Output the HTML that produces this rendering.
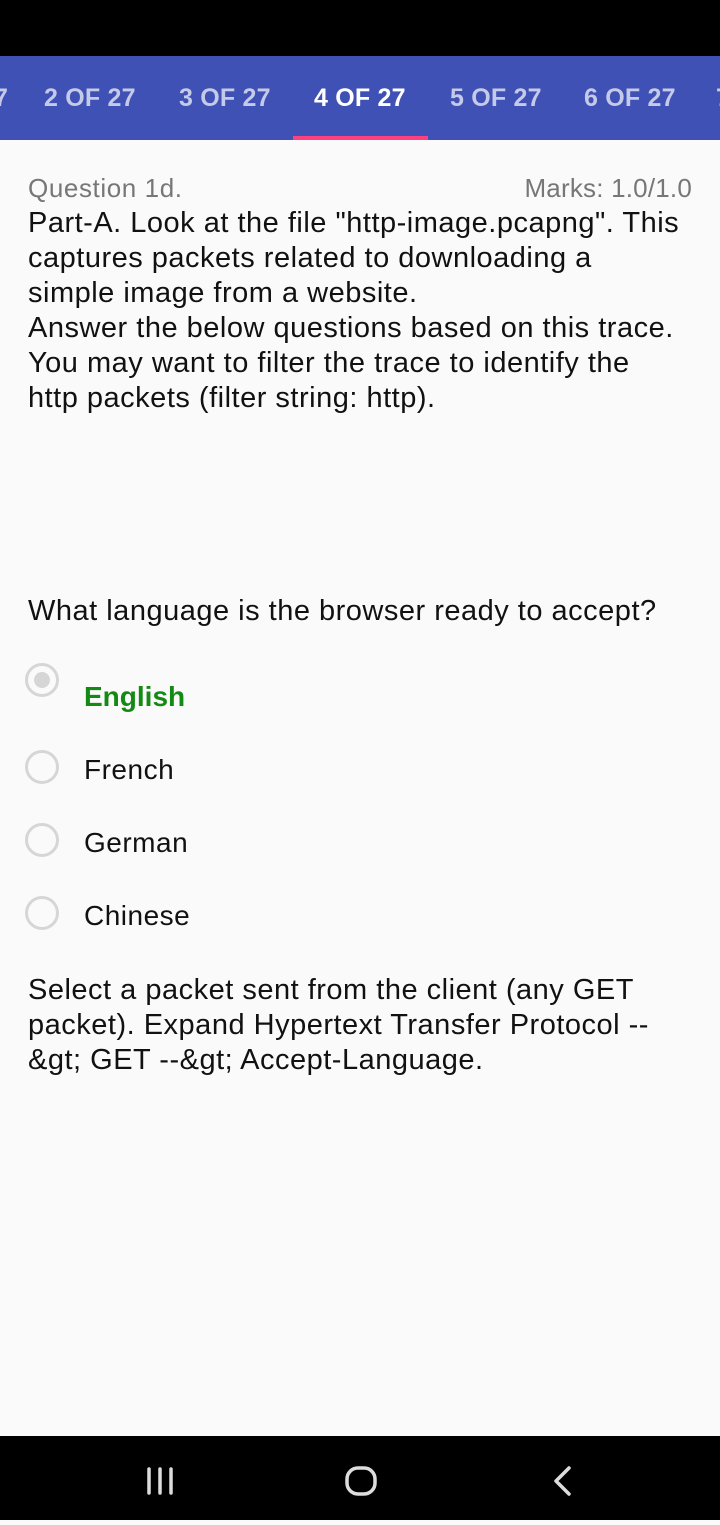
<!DOCTYPE html>
<html><head><meta charset="utf-8"><style>
*{margin:0;padding:0;box-sizing:border-box}
body{width:720px;height:1520px;background:#fafafa;font-family:"Liberation Sans",sans-serif;position:relative;overflow:hidden}
.top{position:absolute;left:0;top:0;width:720px;height:56px;background:#000}
.tabs{position:absolute;left:0;top:56px;width:720px;height:84px;background:#3f51b5}
.tab{position:absolute;top:28px;font-size:25px;color:#c5cae9;letter-spacing:0.2px;font-weight:bold}
.ind{position:absolute;left:293px;top:136px;width:135px;height:4px;background:#ff4081}
.t{position:absolute;left:28px;font-size:29px;color:#111;line-height:35px;letter-spacing:0.5px;white-space:nowrap}
.radio{position:absolute;left:25px;width:34px;height:34px;border:3px solid #d6d6d6;border-radius:50%}
.radio.on::after{content:"";position:absolute;left:6px;top:6px;width:16px;height:16px;border-radius:50%;background:#d6d6d6}
.opt{position:absolute;left:84px;font-size:28px;color:#111;letter-spacing:0.5px}
.nav{position:absolute;left:0;top:1436px;width:720px;height:84px;background:#000}
</style></head><body>
<div class="top"></div>
<div class="tabs">
<div class="tab" style="left:-6px">7</div>
<div class="tab" style="left:44px">2 OF 27</div>
<div class="tab" style="left:179px">3 OF 27</div>
<div class="tab" style="left:314px;color:#fff">4 OF 27</div>
<div class="tab" style="left:450px">5 OF 27</div>
<div class="tab" style="left:584px">6 OF 27</div>
<div class="tab" style="left:716px">7</div>
</div>
<div class="ind"></div>
<div class="t" style="top:171px;font-size:26px;color:#777;letter-spacing:0.6px">Question 1d.</div>
<div class="t" style="top:171px;left:auto;right:28px;font-size:26px;color:#777;letter-spacing:0.2px">Marks: 1.0/1.0</div>
<div class="t" style="top:206px">Part-A. Look at the file "http-image.pcapng". This<br>captures packets related to downloading a<br>simple image from a website.<br>Answer the below questions based on this trace.<br>You may want to filter the trace to identify the<br>http packets (filter string: http).</div>
<div class="t" style="top:594px">What language is the browser ready to accept?</div>
<div class="radio on" style="top:663px"></div>
<div class="opt" style="top:681px;color:#138a13;font-weight:bold;letter-spacing:0">English</div>
<div class="radio" style="top:750px"></div>
<div class="opt" style="top:754px">French</div>
<div class="radio" style="top:823px"></div>
<div class="opt" style="top:827px">German</div>
<div class="radio" style="top:896px"></div>
<div class="opt" style="top:900px">Chinese</div>
<div class="t" style="top:973px">Select a packet sent from the client (any GET<br>packet). Expand Hypertext Transfer Protocol --<br>&amp;gt; GET --&amp;gt; Accept-Language.</div>
<div class="nav">
<svg width="720" height="84" viewBox="0 0 720 84"><g stroke="#ddd" stroke-width="3.5" fill="none" stroke-linecap="round" stroke-linejoin="round">
<line x1="149" y1="33" x2="149" y2="57"/><line x1="160" y1="33" x2="160" y2="57"/><line x1="171" y1="33" x2="171" y2="57"/>
<rect x="347" y="32" width="28" height="26" rx="11"/>
<polyline points="569,32 556,45 569,58"/></g></svg>
</div>
</body></html>
